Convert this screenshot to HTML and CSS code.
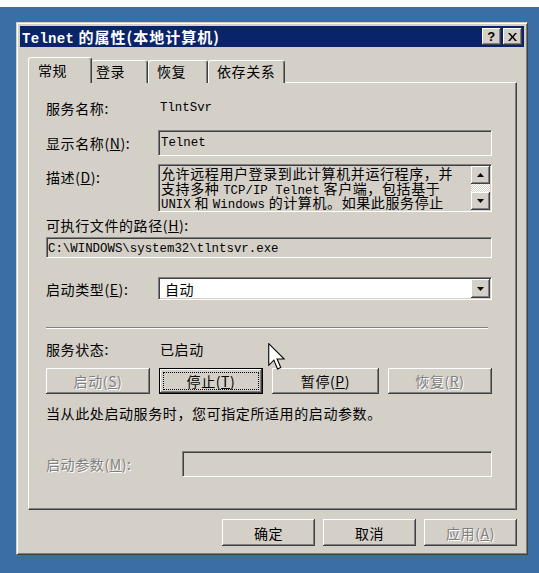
FILE: index.html
```html
<!DOCTYPE html>
<html lang="zh-CN">
<head>
  <meta charset="UTF-8" />
  <title>Telnet 的属性</title>
  <link rel="stylesheet" href="styles.css">
</head>
<body>

  <div class="desktop">
    <div class="window">
      <div class="titlebar">
        <span class="title"><span class="en">Telnet</span> 的属性(本地计算机)</span>
        <div class="caption-btns">
          <div class="cap-btn">?</div>
          <div class="cap-btn">
            <svg width="9" height="8" viewBox="0 0 9 8"><path d="M0 0h2l2.5 3L7 0h2L5.5 4 9 8H7L4.5 5 2 8H0l3.5-4z" fill="#000"/></svg>
          </div>
        </div>
      </div>

      <div class="client">
        <div class="tabs">
          <div class="tab active t1">常规</div>
          <div class="tab t2">登录</div>
          <div class="tab t3">恢复</div>
          <div class="tab t4">依存关系</div>
        </div>

        <div class="panel">
          <div class="row r-name">
            <span class="label">服务名称:</span>
            <span class="value en">TlntSvr</span>
          </div>

          <div class="row r-display">
            <span class="label">显示名称(<u>N</u>):</span>
            <div class="field sunken display-box"><span class="en">Telnet</span></div>
          </div>

          <div class="row r-desc">
            <span class="label desc-label">描述(<u>D</u>):</span>
            <div class="field sunken desc-box">
              <div class="desc-text">
                <div class="desc-line">允许远程用户登录到此计算机并运行程序，并</div>
                <div class="desc-line">支持多种 <span class="en">TCP/IP Telnet</span> 客户端，包括基于</div>
                <div class="desc-line"><span class="en">UNIX</span> 和 <span class="en">Windows</span> 的计算机。如果此服务停止</div>
              </div>
              <div class="scrollbar">
                <div class="sb-btn"><svg width="7" height="4"><path d="M0 4h7L3.5 0z"/></svg></div>
                <div class="sb-track"></div>
                <div class="sb-btn"><svg width="7" height="4"><path d="M0 0h7L3.5 4z"/></svg></div>
              </div>
            </div>
          </div>

          <div class="path-label">可执行文件的路径(<u>H</u>):</div>
          <div class="field sunken path-box"><span class="en">C:\WINDOWS\system32\tlntsvr.exe</span></div>

          <div class="row r-type">
            <span class="label">启动类型(<u>E</u>):</span>
            <div class="field sunken combo">
              <span class="combo-text">自动</span>
              <div class="combo-btn"><svg width="7" height="4"><path d="M0 0h7L3.5 4z"/></svg></div>
            </div>
          </div>

          <div class="separator"></div>

          <div class="row r-status">
            <span class="label">服务状态:</span>
            <span class="value">已启动</span>
          </div>

          <div class="btn-row">
            <div class="btn disabled w104">启动(<u>S</u>)</div>
            <div class="btn focused w104"><span class="focus">停止(<u>T</u>)</span></div>
            <div class="btn w107">暂停(<u>P</u>)</div>
            <div class="btn disabled w104">恢复(<u>R</u>)</div>
          </div>

          <p class="hint">当从此处启动服务时，您可指定所适用的启动参数。</p>

          <div class="row r-param">
            <span class="label param-label disabled">启动参数(<u>M</u>):</span>
            <div class="field sunken param-box"></div>
          </div>
        </div>

        <div class="dialog-btns">
          <div class="btn w93">确定</div>
          <div class="btn w93">取消</div>
          <div class="btn disabled w93">应用(<u>A</u>)</div>
        </div>
      </div>
    </div>
  </div>

  <svg class="cursor" width="17" height="27" viewBox="0 0 12.5 20">
    <path d="M0.5 0.5v16l3.8-3.8 2.7 6.5 2.4-1-2.7-6.3h5.3z" fill="#fff" stroke="#000" stroke-width="0.8" stroke-linejoin="miter"/>
  </svg>

</body>
</html>
```

FILE: styles.css
```css
* { box-sizing: border-box; margin: 0; padding: 0; }
body {
  background: #3a6ea5;
  font-family: "Noto Sans CJK SC", sans-serif;
  font-size: 14px;
  letter-spacing: 0.6px;
  color: #000;
}

.en {
  font-family: "Liberation Mono", monospace;
  font-size: 12.4px;
  letter-spacing: 0;
}

u { text-decoration: underline; text-underline-offset: 1px; }

.desktop {
  height: 573px;
  border-top: 7px solid #fff;
  padding: 15px 0 0 16px;
}

.window {
  width: 512px;
  height: 533px;
  background: #d4d0c8;
  border: 1px solid;
  border-color: #d4d0c8 #404040 #404040 #d4d0c8;
  box-shadow: inset 1px 1px #fff, inset -1px -1px #808080;
  padding: 3px;
}

.titlebar {
  height: 21px;
  background: #0a246a;
  color: #fff;
  display: flex;
  align-items: center;
  justify-content: space-between;
  padding: 0 2px;
}

.title {
  font-weight: bold;
  font-size: 15px;
  letter-spacing: 1px;
  white-space: nowrap;
}

.title .en {
  font-size: 14px;
  font-weight: bold;
  letter-spacing: 0.3px;
}

.caption-btns {
  display: flex;
  gap: 2px;
}

.cap-btn {
  width: 19px;
  height: 17px;
  background: #d4d0c8;
  box-shadow: inset -1px -1px #404040, inset 1px 1px #fff, inset -2px -2px #808080;
  color: #000;
  font-family: "Liberation Sans", sans-serif;
  font-weight: bold;
  font-size: 13px;
  display: flex;
  align-items: center;
  justify-content: center;
  line-height: 1;
}

.client {
  padding: 10px 7px 0 8px;
}

/* tabs */
.tabs {
  display: flex;
  align-items: flex-end;
  height: 26px;
  margin-bottom: -1px;
}

.tab {
  height: 23px;
  line-height: 21px;
  background: #d4d0c8;
  border-top: 1px solid #fff;
  border-left: 1px solid #fff;
  border-right: 1px solid #404040;
  box-shadow: inset -1px 0 #808080;
  border-radius: 3px 3px 0 0;
  white-space: nowrap;
}

.tab.active {
  height: 26px;
  line-height: 24px;
  position: relative;
  z-index: 1;
}

.t1 { width: 64px; padding-left: 9px; }
.t2 { width: 56px; padding-left: 4px; border-left: none; }
.t3 { width: 60px; padding-left: 8px; }
.t4 { width: 77px; padding-left: 8px; }

.panel {
  height: 428px;
  border: 1px solid;
  border-color: #fff #404040 #404040 #fff;
  box-shadow: inset -1px -1px #808080;
  padding: 15px 0 0 17px;
}

.row {
  display: flex;
  align-items: center;
}

.label {
  width: 112px;
  flex-shrink: 0;
  white-space: nowrap;
}

.value {
  padding-left: 2px;
}

.r-name { height: 20px; }

.field {
  width: 334px;
  background: #d4d0c8;
}

.sunken {
  border: 1px solid;
  border-color: #808080 #fff #fff #808080;
  box-shadow: inset 1px 1px #404040, inset -1px -1px #d4d0c8;
  padding: 1px;
}

.r-display { margin-top: 12px; }

.display-box {
  height: 26px;
  line-height: 16px;
  padding-left: 2px;
}

.r-desc {
  margin-top: 8px;
  align-items: flex-start;
}

.desc-label {
  margin-top: 5px;
  line-height: 16px;
}

.desc-box {
  height: 48px;
  display: flex;
}

.desc-text {
  flex: 1;
  overflow: hidden;
  white-space: nowrap;
  padding: 0 0 0 1px;
}

.desc-line {
  height: 14.5px;
  line-height: 14.5px;
}

.scrollbar {
  width: 19px;
  display: flex;
  flex-direction: column;
}

.sb-btn {
  height: 18px;
  background: #d4d0c8;
  box-shadow: inset -1px -1px #404040, inset 1px 1px #fff, inset -2px -2px #808080;
  display: flex;
  align-items: center;
  justify-content: center;
}

.sb-track {
  flex: 1;
  background: repeating-conic-gradient(#fff 0 25%, #d4d0c8 0 50%) 0 0 / 2px 2px;
}

.path-label {
  margin-top: 5px;
  line-height: 16px;
}

.path-box {
  width: 446px;
  height: 21px;
  margin-top: 4px;
  line-height: 15px;
  padding-left: 1px;
  white-space: nowrap;
}

.r-type { margin-top: 19px; }

.combo {
  height: 23px;
  background: #fff;
  display: flex;
  align-items: center;
  justify-content: space-between;
}

.combo-text { padding-left: 5px; }

.combo-btn {
  width: 19px;
  height: 19px;
  background: #d4d0c8;
  box-shadow: inset -1px -1px #404040, inset 1px 1px #fff, inset -2px -2px #808080;
  display: flex;
  align-items: center;
  justify-content: center;
}

.separator {
  width: 442px;
  margin-top: 27px;
  border-top: 1px solid #808080;
  border-bottom: 1px solid #fff;
}

.r-status {
  margin-top: 12px;
  height: 16px;
}

/* buttons */
.btn-row {
  display: flex;
  gap: 9px;
  margin-top: 11px;
}

.btn {
  height: 26px;
  background: #d4d0c8;
  box-shadow: inset -1px -1px #404040, inset 1px 1px #fff, inset -2px -2px #808080;
  display: flex;
  align-items: center;
  justify-content: center;
  white-space: nowrap;
}

.btn.focused {
  border: 1px solid #000;
  padding: 3px;
  box-shadow: inset -1px -1px #404040, inset 1px 1px #fff, inset -2px -2px #808080;
}

.focus {
  flex: 1;
  align-self: stretch;
  border: 1px dotted #000;
  display: flex;
  align-items: center;
  justify-content: center;
}

.disabled {
  color: #808080;
  text-shadow: 1px 1px #fff;
}

.w93 { width: 93px; height: 27px; }
.w104 { width: 104px; }
.w107 { width: 107px; }

.hint {
  margin-top: 11px;
  line-height: 16px;
  white-space: nowrap;
}

.r-param { margin-top: 30px; }

.param-label { width: 136px; }

.param-box {
  width: 310px;
  height: 26px;
}

.dialog-btns {
  display: flex;
  justify-content: flex-end;
  gap: 8px;
  margin-top: 9px;
}

.cursor {
  position: absolute;
  left: 268px;
  top: 343px;
}
```
